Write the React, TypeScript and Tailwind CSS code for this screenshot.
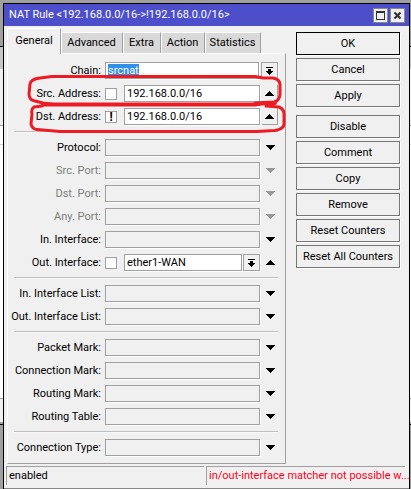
import React from "react";

type Tone = "normal" | "dim";

function Triangle({ up = false, tone = "normal" }: { up?: boolean; tone?: Tone }) {
  return (
    <svg width="9" height="5" viewBox="0 0 9 5" shapeRendering="crispEdges" aria-hidden="true">
      <path
        d={up ? "M4 0h1v1h1v1h1v1h1v1h1v1H0V4h1V3h1V2h1V1h1z" : "M0 0h9v1H8v1H7v1H6v1H5v1H4V4H3V3H2V2H1V1H0z"}
        fill={tone === "dim" ? "#959b94" : "#000"}
      />
    </svg>
  );
}

function DropIcon() {
  return (
    <svg width="7" height="8" viewBox="0 0 7 8" shapeRendering="crispEdges" aria-hidden="true">
      <path d="M0 0h7v1H0zM2 2h3v2h2v1H6v1H5v1H4v1H3V7H2V6H1V5H0V4h2z" fill="#000" />
    </svg>
  );
}

function Toggle({ label, up, tone, boxed }: { label: string; up?: boolean; tone?: Tone; boxed?: boolean }) {
  return (
    <button
      type="button"
      aria-label={label}
      className={
        "flex h-[17px] w-4 shrink-0 items-center justify-center " +
        (boxed ? "border-b border-r border-[#a0a0a0] bg-[#f0f0f0]" : "")
      }
    >
      <Triangle up={up} tone={tone} />
    </button>
  );
}

function DropButton({ label }: { label: string }) {
  return (
    <button
      type="button"
      aria-label={label}
      className="flex h-[17px] w-[17px] shrink-0 items-center justify-center border border-[#a0a0a0] bg-[#f0f0f0] shadow-[1px_1px_0_#fff]"
    >
      <DropIcon />
    </button>
  );
}

function Invert({ label, checked = false }: { label: string; checked?: boolean }) {
  return (
    <label className="relative mr-[7px] flex h-3 w-3 shrink-0">
      <input
        type="checkbox"
        aria-label={label}
        defaultChecked={checked}
        className="peer h-3 w-3 appearance-none border border-[#a0a0a0] bg-white"
      />
      <span
        aria-hidden="true"
        className="absolute inset-0 hidden items-center justify-center text-xs font-bold leading-3 peer-checked:flex"
      >
        !
      </span>
    </label>
  );
}

const fieldBase = "h-[17px] w-0 min-w-0 flex-1 border border-[#a0a0a0] px-[2px] outline-none shadow-[1px_1px_0_#fff] ";

function Row({ id, label, tone = "normal", children }: { id: string; label: string; tone?: Tone; children: React.ReactNode }) {
  return (
    <div className="flex h-[17px] items-center">
      <label
        htmlFor={id}
        className={
          "mr-1 flex w-[87px] shrink-0 justify-end whitespace-nowrap leading-4 " +
          (tone === "dim" ? "text-[#7d7d7d]" : "")
        }
      >
        {label}
      </label>
      {children}
    </div>
  );
}

function EmptyRow({ id, label, tone = "normal" }: { id: string; label: string; tone?: Tone }) {
  return (
    <Row id={id} label={label} tone={tone}>
      <input id={id} type="text" disabled={tone === "dim"} className={fieldBase + "mr-[2px] bg-[#f0f0f0]"} />
      <Toggle label={"Expand " + label} tone={tone} />
    </Row>
  );
}

function AddressRow({ id, label, inverted }: { id: string; label: string; inverted?: boolean }) {
  return (
    <Row id={id} label={label}>
      <Invert label={"Invert " + label} checked={inverted} />
      <input id={id} type="text" defaultValue="192.168.0.0/16" className={fieldBase + "mr-[2px] bg-white"} />
      <Toggle label={"Collapse " + label} up boxed />
    </Row>
  );
}

function Divider() {
  return <hr className="h-[2px] border-0 border-t border-[#c0c0c0] bg-[#f8f8f8]" />;
}

function Action({ children, primary, spaced }: { children: string; primary?: boolean; spaced?: boolean }) {
  return (
    <button
      type="button"
      className={
        "flex h-[23px] w-full items-center justify-center whitespace-nowrap border bg-[#f0f0f0] shadow-[1px_1px_0_#fff] " +
        (primary ? "border-black " : "border-[#777] ") +
        (spaced ? "mt-[5px]" : "")
      }
    >
      {children}
    </button>
  );
}

const tabs = [
  { name: "Advanced", width: "w-[62px]" },
  { name: "Extra", width: "w-[38px]" },
  { name: "Action", width: "w-11" },
  { name: "Statistics", width: "w-14" },
];

function Backdrop() {
  return (
    <div aria-hidden="true" className="absolute inset-0 flex flex-col bg-[#a0a0a0]">
      <div className="h-[46px]" />
      <div className="h-[23px] border-t border-black bg-[#c6c6c6]" />
      <div className="h-[57px] border-b border-[#a0a0a0] bg-[#f0f0f0]" />
      <div className="h-[18px] bg-white" />
      <div className="h-px bg-[#d0d0d0]" />
      <div className="h-[254px] border-b border-[#a0a0a0] bg-white" />
      <div className="h-[23px] bg-[#f0f0f0]" />
      <div className="h-[3px] border-b border-black bg-[#a0a0a0]" />
    </div>
  );
}

function Marks() {
  return (
    <svg
      className="pointer-events-none absolute left-6 top-[70px]"
      width="264"
      height="66"
      viewBox="24 70 264 66"
      fill="none"
      stroke="#ed1c24"
      strokeWidth="3"
      strokeLinecap="round"
      strokeLinejoin="round"
      aria-hidden="true"
    >
      <path d="M52 76.500H255L263 78H273Q280 79 280 85V95Q279 101 274 102L255 103" />
      <path d="M52 76.500L40 78Q31 79 30 84L29 94Q29 100 35 101L43 103L54 104.500" />
      <path d="M43 104.500H255L265 103H275" strokeWidth="4" />
      <path d="M42 106L34 107Q31 109 32 114L31 124Q32 129 37 129.500L60 131.500H257L275 130.500Q284 129 284 124V114Q284 109 279 107L266 106" />
    </svg>
  );
}

export default function App() {
  return (
    <div className="relative pb-px pl-[3px] pr-px pt-[3px] font-[Roboto,sans-serif] text-[11px] leading-4 text-black">
      <Backdrop />
      <section className="relative flex flex-col border-l border-r border-t border-black bg-[#f0f0f0]">
        <header className="flex h-[22px] items-center bg-[#4c4fc9] pl-[5px] pr-1 text-white">
          <h1 className="flex-1 truncate leading-5">{"NAT Rule <192.168.0.0/16->!192.168.0.0/16>"}</h1>
          <div className="flex gap-[2px]">
            <button type="button" aria-label="Maximize" className="flex h-[15px] w-[15px] items-center justify-center border border-[#8a8a8a] bg-[#f0f0f0]">
              <svg width="9" height="9" viewBox="0 0 9 9" shapeRendering="crispEdges" aria-hidden="true">
                <path d="M0 0h9v9H0zM1 2v6h7V2z" fill="#333" fillRule="evenodd" />
              </svg>
            </button>
            <button type="button" aria-label="Close" className="flex h-[15px] w-[15px] items-center justify-center border border-[#8a8a8a] bg-[#f0f0f0]">
              <svg width="9" height="9" viewBox="0 0 9 9" aria-hidden="true">
                <path d="M1.500 1.500l6 6M7.500 1.500l-6 6" stroke="#333" strokeWidth="2.200" />
              </svg>
            </button>
          </div>
        </header>

        <div className="flex gap-[10px] pl-[3px] pr-[9px]">
          <div className="min-w-0 flex-1 pt-[2px]">
            <div role="tablist" className="flex items-end">
              <button role="tab" aria-selected="true" type="button" className="relative -mb-px flex h-[26px] w-[54px] items-center justify-center border-l border-r border-t border-l-white border-r-[#a0a0a0] border-t-white bg-[#f0f0f0] pb-[2px]">
                General
              </button>
              {tabs.map((t) => (
                <button
                  key={t.name}
                  role="tab"
                  aria-selected="false"
                  type="button"
                  className={
                    "flex h-[21px] items-center justify-center border-r border-t border-r-[#a0a0a0] border-t-white bg-[#d9d9d9] shadow-[inset_1px_0_0_#fff] " +
                    t.width
                  }
                >
                  {t.name}
                </button>
              ))}
            </div>

            <div className="flex flex-col gap-[6px] border border-b-[#a0a0a0] border-l-white border-r-[#a0a0a0] border-t-white pb-[7px] pl-[6px] pr-[7px] pt-2">
              <Row id="chain" label="Chain:">
                <input
                  id="chain"
                  type="text"
                  defaultValue="srcnat"
                  autoFocus
                  onFocus={(e) => e.currentTarget.select()}
                  className={fieldBase + "mr-[2px] bg-white selection:bg-[#3390e8] selection:text-white"}
                />
                <DropButton label="Choose chain" />
              </Row>
              <AddressRow id="src" label="Src. Address:" />
              <AddressRow id="dst" label="Dst. Address:" inverted />
              <Divider />
              <EmptyRow id="protocol" label="Protocol:" />
              <EmptyRow id="src-port" label="Src. Port:" tone="dim" />
              <EmptyRow id="dst-port" label="Dst. Port:" tone="dim" />
              <EmptyRow id="any-port" label="Any. Port:" tone="dim" />
              <EmptyRow id="in-if" label="In. Interface:" />
              <Row id="out-if" label="Out. Interface:">
                <Invert label="Invert Out. Interface" />
                <input id="out-if" type="text" defaultValue="ether1-WAN" className={fieldBase + "mr-px bg-white"} />
                <DropButton label="Choose interface" />
                <div className="w-[2px] shrink-0" />
                <Toggle label="Collapse Out. Interface" up />
              </Row>
              <Divider />
              <EmptyRow id="in-list" label="In. Interface List:" />
              <EmptyRow id="out-list" label="Out. Interface List:" />
              <Divider />
              <EmptyRow id="packet-mark" label="Packet Mark:" />
              <EmptyRow id="conn-mark" label="Connection Mark:" />
              <EmptyRow id="routing-mark" label="Routing Mark:" />
              <EmptyRow id="routing-table" label="Routing Table:" />
              <Divider />
              <EmptyRow id="conn-type" label="Connection Type:" />
            </div>
          </div>

          <div className="flex w-[104px] shrink-0 flex-col gap-[3px] pt-[6px]">
            <Action primary>OK</Action>
            <Action>Cancel</Action>
            <Action>Apply</Action>
            <Action spaced>Disable</Action>
            <Action>Comment</Action>
            <Action>Copy</Action>
            <Action>Remove</Action>
            <Action>Reset Counters</Action>
            <Action>Reset All Counters</Action>
          </div>
        </div>

        <footer className="mt-[2px] flex gap-[2px] border-b border-[#888] pb-[3px] pl-[2px] pr-1">
          <div className="h-[19px] flex-1 border-l border-t border-[#a0a0a0] pl-[2px] pt-px">enabled</div>
          <div className="h-[19px] w-[199px] whitespace-nowrap border-l border-t border-[#a0a0a0] pl-[2px] pt-px text-[#ff0020]">
            in/out-interface matcher not possible w...
          </div>
        </footer>
      </section>
      <Marks />
    </div>
  );
}
